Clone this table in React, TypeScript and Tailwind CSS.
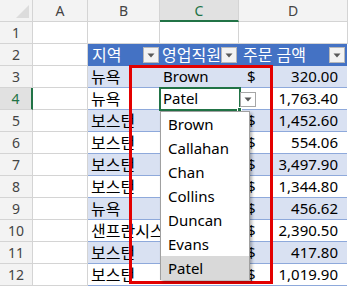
import React from "react";

const cols = [33, 55, 72, 79, 109];
const KR = '"Noto Sans", "Noto Sans CJK KR", sans-serif';

type Row = { b: string; c: string; d: string };
const data: Row[] = [
  { b: "뉴욕", c: "Brown", d: "320.00" },
  { b: "뉴욕", c: "Patel", d: "1,763.40" },
  { b: "보스턴", c: "", d: "1,452.60" },
  { b: "보스턴", c: "", d: "554.06" },
  { b: "보스턴", c: "", d: "3,497.90" },
  { b: "보스턴", c: "", d: "1,344.80" },
  { b: "뉴욕", c: "", d: "456.62" },
  { b: "샌프란시스코", c: "", d: "2,390.50" },
  { b: "보스턴", c: "", d: "417.80" },
  { b: "보스턴", c: "", d: "1,019.90" },
];

const names = ["Brown", "Callahan", "Chan", "Collins", "Duncan", "Evans", "Patel"];

function Tri() {
  return (
    <svg width="8" height="5" viewBox="0 0 8 5">
      <path d="M0.5 0.5 L7.5 0.5 L4 4.5 Z" fill="#595959" />
    </svg>
  );
}

function FilterBtn() {
  return (
    <div className="w-[16px] h-[16px] bg-[#f3f3f3] border border-[#b8b8b8] flex items-center justify-center shrink-0">
      <Tri />
    </div>
  );
}

function RowHead({ n, sel }: { n: number; sel?: boolean }) {
  return (
    <div
      className={
        "h-full flex items-center justify-center text-[14px] border-b border-[#d4d4d4] " +
        (sel
          ? "bg-[#e1e1e1] text-[#217346] border-r-2 border-r-[#217346]"
          : "bg-[#f3f3f3] text-[#444] border-r border-r-[#d4d4d4]")
      }
      style={{ width: cols[0] }}
    >
      {n}
    </div>
  );
}

export default function App() {
  return (
    <div
      className="relative w-[348px] h-[286px] overflow-hidden bg-white"
      style={{ fontFamily: KR }}
    >
      {/* Column header row */}
      <div className="flex h-[22px]">
        <div
          className="h-full bg-[#f3f3f3] border-r border-b border-[#d4d4d4] relative"
          style={{ width: cols[0] }}
        >
          <div className="absolute right-[3px] bottom-[3px] w-0 h-0 border-l-[13px] border-l-transparent border-b-[13px] border-b-[#dcdcdc]" />
        </div>
        {["A", "B", "C", "D"].map((l, i) => (
          <div
            key={l}
            className={
              "h-full flex items-center justify-center text-[14px] border-r border-[#d4d4d4] " +
              (l === "C"
                ? "bg-[#e1e1e1] text-[#217346] border-b-2 border-b-[#217346]"
                : "bg-[#f3f3f3] text-[#444] border-b border-b-[#d4d4d4]")
            }
            style={{ width: cols[i + 1] }}
          >
            {l}
          </div>
        ))}
      </div>

      {/* Row 1 */}
      <div className="flex h-[22px]">
        <RowHead n={1} />
        {[1, 2, 3, 4].map((i) => (
          <div
            key={i}
            className="h-full border-r border-b border-[#d4d4d4]"
            style={{ width: cols[i] }}
          />
        ))}
      </div>

      {/* Row 2 - table header */}
      <div className="flex h-[22px]">
        <RowHead n={2} />
        <div
          className="h-full border-r border-b border-[#d4d4d4]"
          style={{ width: cols[1] }}
        />
        <div className="flex h-full bg-[#4472c4] text-white text-[16px]">
          <div
            className="h-full flex items-center pl-[4px] pr-[1px] justify-between"
            style={{ width: cols[2] }}
          >
            <span>지역</span>
            <FilterBtn />
          </div>
          <div
            className="h-full flex items-center pl-[2px] pr-[2px] overflow-hidden"
            style={{ width: cols[3] }}
          >
            <span className="whitespace-nowrap overflow-hidden flex-1">영업직원</span>
            <FilterBtn />
          </div>
          <div
            className="h-full flex items-center pl-[4px] pr-[2px] justify-between"
            style={{ width: cols[4] - 1 }}
          >
            <span className="whitespace-nowrap">주문 금액</span>
            <FilterBtn />
          </div>
        </div>
      </div>

      {/* Data rows */}
      {data.map((r, idx) => {
        const n = idx + 3;
        const blue = idx % 2 === 0;
        const bg = blue ? "bg-[#d9e1f2]" : "bg-white";
        return (
          <div key={n} className="flex h-[22px]">
            <RowHead n={n} sel={n === 4} />
            <div
              className="h-full border-r border-b border-[#d4d4d4]"
              style={{ width: cols[1] }}
            />
            <div
              className={"h-full flex text-[15px] text-black border-b border-[#8ea9db] " + bg}
            >
              <div
                className="h-full flex items-center pl-[3px] overflow-hidden whitespace-nowrap text-[16px]"
                style={{ width: cols[2] }}
              >
                {r.b}
              </div>
              <div
                className="h-full flex items-center pl-[3px] overflow-hidden whitespace-nowrap"
                style={{ width: cols[3] }}
              >
                {r.c}
              </div>
              <div
                className="h-full flex items-center pl-[8px] pr-[9px] justify-between"
                style={{ width: cols[4] - 1 }}
              >
                <span>$</span>
                <span>{r.d}</span>
              </div>
            </div>
          </div>
        );
      })}

      {/* Red highlight rectangle */}
      <div className="absolute left-[129px] top-[65px] w-[144px] h-[219px] border-[3px] border-[#e30000] pointer-events-none" />

      {/* Active cell */}
      <div className="absolute left-[159px] top-[87px] w-[82px] h-[24px] border-2 border-[#217346]" />
      <div className="absolute left-[237px] top-[107px] w-[5px] h-[5px] bg-[#217346] border border-white" />

      {/* In-cell dropdown button */}
      <div className="absolute left-[240px] top-[92px] w-[16px] h-[15px] bg-white border border-[#a6a6a6] flex items-center justify-center">
        <Tri />
      </div>

      {/* Dropdown list */}
      <div className="absolute left-[160px] top-[111px] w-[90px] h-[169px] bg-white border border-[#a0a0a0] shadow-[2px_2px_3px_rgba(0,0,0,0.3)] text-[15px] text-black">
        {names.map((nm) => (
          <div
            key={nm}
            className={
              "h-[24px] flex items-center pl-[7px] " +
              (nm === "Patel" ? "bg-[#d9d9d9]" : "")
            }
          >
            {nm}
          </div>
        ))}
      </div>
    </div>
  );
}
